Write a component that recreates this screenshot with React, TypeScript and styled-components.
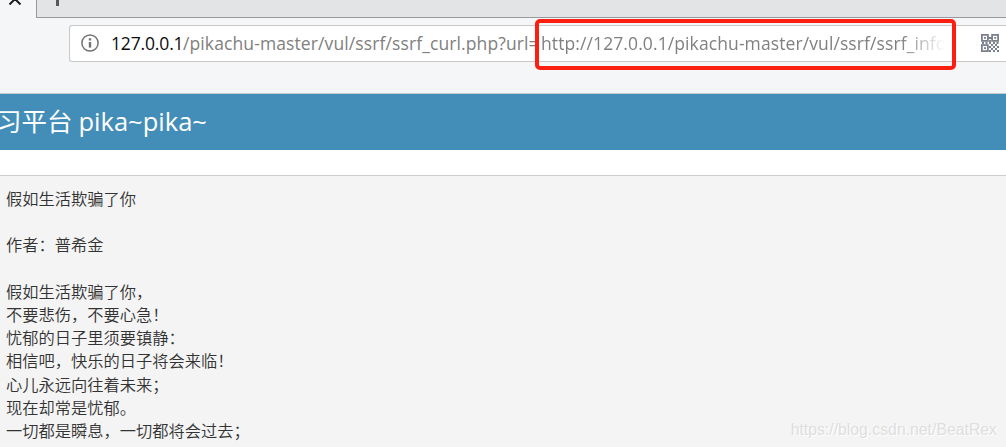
import React from 'react';
import styled, { createGlobalStyle } from 'styled-components';

const poem = [
  '假如生活欺骗了你',
  '',
  '作者：普希金',
  '',
  '假如生活欺骗了你，',
  '不要悲伤，不要心急！',
  '忧郁的日子里须要镇静：',
  '相信吧，快乐的日子将会来临！',
  '心儿永远向往着未来；',
  '现在却常是忧郁。',
  '一切都是瞬息，一切都将会过去；',
];

const QrIcon = () => (
  <svg width="18" height="18" viewBox="0 0 18 18" fill="none" stroke="#7b818c" strokeWidth="1.8">
    <rect x="0.9" y="0.9" width="6" height="6" />
    <rect x="11.1" y="0.9" width="6" height="6" />
    <rect x="0.9" y="11.1" width="6" height="6" />
    <path d="M3 3.9h2M13.2 3.9h2M3 14.1h2M7 4h4M9 6v3M1 9h2M4.5 9h2M8 9h2M12 9h2M15.5 9h2M10 11h2M14 11h2M8 13h2M12 13h2M16 13h2M10 15h2M14 15h2M8 17h2M12 17h2M16 17h2" />
  </svg>
);

const InfoIcon = () => (
  <svg width="18" height="18" viewBox="0 0 18 18" fill="none" stroke="#737373">
    <circle cx="9" cy="9" r="8.1" strokeWidth="1.5" />
    <path d="M9 8v5.6" strokeWidth="2.4" />
    <path d="M9 4.3v2.2" strokeWidth="2.4" />
  </svg>
);

const App = () => {
  return (
    <Page>
      <GlobalStyle />
      <TabStrip>
        <ActiveTab>
          <svg width="14" height="5" viewBox="0 0 14 5" fill="none" stroke="#1c1c1f" strokeWidth="2">
            <path d="M1.5 4.5 L7 -1 L12.5 4.5" />
          </svg>
        </ActiveTab>
        <TabRest>
          <PlusStem />
        </TabRest>
      </TabStrip>
      <Toolbar>
        <AddressBar>
          <InfoIcon />
          <Url>
            <UrlPart $width={72} $color="#0c0c0d" $spacing={-0.15}>127.0.0.1</UrlPart>
            <UrlPart $width={358} $spacing={0.11}>/pikachu-master/vul/ssrf/ssrf_curl.php?url=</UrlPart>
            <UrlPart $width={404} $spacing={0.1} $fade>http://127.0.0.1/pikachu-master/vul/ssrf/ssrf_info</UrlPart>
          </Url>
          <QrIcon />
        </AddressBar>
        <Highlight />
      </Toolbar>
      <Banner>
        <BannerCjk>习平台</BannerCjk>
        <span>pika~pika~</span>
      </Banner>
      <Poem>{poem.join('\n')}</Poem>
      <Watermark>https://blog.csdn.net/BeatRex</Watermark>
    </Page>
  );
};
export default App;

const GlobalStyle = createGlobalStyle`
  body {
    margin: 0;
    background: #fff;
    overflow: hidden;
  }
  * {
    box-sizing: border-box;
  }
`;

const Page = styled.div`
  position: relative;
  display: flex;
  flex-direction: column;
  height: 447px;
  overflow: hidden;
`;

const TabStrip = styled.div`
  display: flex;
  height: 18px;
  background: #f5f6f7;
`;

const ActiveTab = styled.div`
  width: 36px;
  padding-left: 8px;
  line-height: 0;
`;

const TabRest = styled.div`
  flex: 1;
  padding-left: 19px;
  background: #e3e4e6;
  border-left: 1px solid #96999d;
  border-bottom: 1px solid #96999d;
`;

const PlusStem = styled.div`
  width: 3px;
  height: 6px;
  background: #58585b;
`;

const Toolbar = styled.div`
  position: relative;
  height: 76px;
  padding: 7px 0 0 69px;
  background: #f5f6f8;
  border-bottom: 1px solid #c9cacc;
`;

const AddressBar = styled.div`
  display: flex;
  align-items: center;
  height: 37px;
  padding: 0 7px 0 11px;
  background: #fff;
  border: 1px solid #c8c8ca;
  border-right: none;
  border-radius: 3px 0 0 3px;

  svg {
    flex: none;
    margin-bottom: 1px;
  }
`;

const Url = styled.div`
  display: flex;
  flex: 1;
  margin: 0 0 2px 12px;
  font-family: 'Open Sans', 'Noto Sans', sans-serif;
  font-size: 17.5px;
  line-height: 24px;
  white-space: nowrap;
`;

const UrlPart = styled.span<{ $width: number; $spacing: number; $color?: string; $fade?: boolean }>`
  flex: none;
  width: ${(p) => p.$width}px;
  color: ${(p) => p.$color || '#808080'};
  letter-spacing: ${(p) => p.$spacing}px;
  ${(p) => p.$fade && 'mask-image: linear-gradient(to left, transparent, #000 44px);'}
`;

// red frame drawn over the address bar
const Highlight = styled.div`
  position: absolute;
  left: 535px;
  top: 1px;
  width: 421px;
  height: 51px;
  border: 4px solid #fb1f12;
  border-radius: 5px;
`;

const Banner = styled.div`
  display: flex;
  align-items: center;
  height: 56px;
  padding-bottom: 2px;
  background: #438eb9;
  color: #fff;
  font-family: 'Open Sans', 'Noto Sans', sans-serif;
  font-size: 25.5px;
  white-space: nowrap;
`;

const BannerCjk = styled.span`
  margin: 0 6px 3px -4px;
  font-family: 'Noto Sans CJK SC', sans-serif;
  font-size: 25.5px;
`;

const Poem = styled.pre`
  flex: 1;
  margin: 25px 0 0;
  padding: 11px 6px 0;
  background: #f4f4f4;
  border-top: 1px solid #ccc;
  color: #333;
  font-family: 'Noto Sans CJK SC', sans-serif;
  font-size: 16.25px;
  font-weight: 350;
  line-height: 23.2px;
`;

const Watermark = styled.div`
  position: absolute;
  right: 9px;
  bottom: 7px;
  color: #dedede;
  font-family: 'Liberation Sans', Arial, sans-serif;
  font-size: 15.8px;
  line-height: 20px;
  text-shadow: 1px 1px 0 #fff;
`;
